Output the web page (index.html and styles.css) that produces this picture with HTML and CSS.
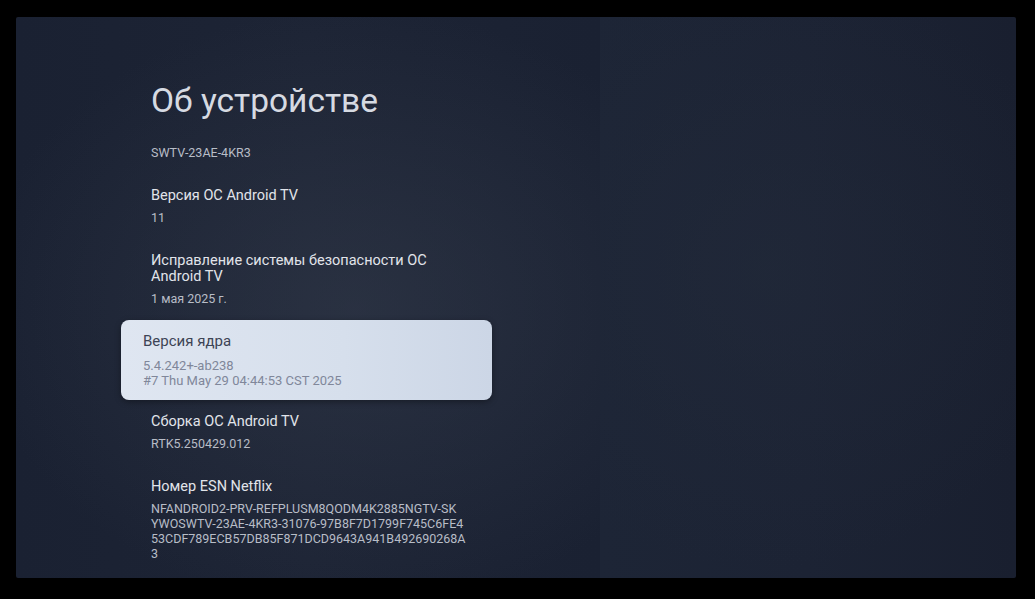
FILE: index.html
```html
<!DOCTYPE html>
<html lang="ru">
<head>
<meta charset="utf-8">
<title>Об устройстве</title>
<link rel="stylesheet" href="styles.css">
</head>
<body>
<div class="screen">
  <section class="panel-main">
    <h1 class="page-title">Об устройстве</h1>
    <div class="list">
      <div class="item">
        <div class="value">SWTV-23AE-4KR3</div>
      </div>
      <div class="item">
        <div class="label">Версия ОС Android TV</div>
        <div class="value">11</div>
      </div>
      <div class="item">
        <div class="label">Исправление системы безопасности ОС Android TV</div>
        <div class="value">1 мая 2025 г.</div>
      </div>
      <div class="item item-focused">
        <div class="label">Версия ядра</div>
        <div class="value">5.4.242+-ab238<br>#7 Thu May 29 04:44:53 CST 2025</div>
      </div>
      <div class="item">
        <div class="label">Сборка ОС Android TV</div>
        <div class="value">RTK5.250429.012</div>
      </div>
      <div class="item">
        <div class="label">Номер ESN Netflix</div>
        <div class="value value-code">NFANDROID2-PRV-REFPLUSM8QODM4K2885NGTV-SK<br>YWOSWTV-23AE-4KR3-31076-97B8F7D1799F745C6FE4<br>53CDF789ECB57DB85F871DCD9643A941B492690268A<br>3</div>
      </div>
    </div>
  </section>
  <section class="panel-side"></section>
</div>
</body>
</html>
```

FILE: styles.css
```css
html, body {
  margin: 0;
  padding: 0;
  background: #000;
  width: 1035px;
  height: 599px;
  overflow: hidden;
  font-family: Roboto, "Noto Sans", "Liberation Sans", sans-serif;
}

.screen {
  margin: 17px 0 0 16px;
  width: 1000px;
  height: 561px;
  display: flex;
  overflow: hidden;
  border-radius: 2px;
}

.panel-main {
  width: 584px;
  flex: none;
  box-sizing: border-box;
  padding: 65px 0 0 105px;
  background:
    radial-gradient(ellipse 380px 300px at 58% 52%, rgba(52, 60, 76, 0.55), rgba(52, 60, 76, 0) 100%),
    linear-gradient(90deg, #1a2132 0%, #1d2435 50%, #1a2132 100%);
}

.panel-side {
  flex: 1;
  background:
    radial-gradient(ellipse 320px 300px at 40% 45%, rgba(36, 44, 60, 0.45), rgba(36, 44, 60, 0) 100%),
    linear-gradient(90deg, #1d2536 0%, #1c2334 50%, #191f2f 100%);
}

.page-title {
  margin: 0 0 11px 30px;
  font-weight: 400;
  font-size: 33.5px;
  line-height: 38px;
  color: #d6dae2;
}

.list {
  width: 371px;
  display: flex;
  flex-direction: column;
}

.item {
  padding: 14px 30px;
}

.label {
  font-size: 14.5px;
  line-height: 16px;
  color: #e1e4ea;
}

.value {
  margin-top: 6px;
  font-size: 12.5px;
  line-height: 15px;
  color: #b8bdc7;
}

.value-code {
  white-space: nowrap;
}

.item > .value:first-child {
  margin-top: 0;
}

.item-focused {
  padding: 13px 22px 12px;
  border-radius: 8px;
  background: linear-gradient(90deg, #dfe6f1 0%, #d6dfec 60%, #ccd6e6 100%);
  box-shadow: 0 2px 6px rgba(0, 0, 0, 0.35);
}

.item-focused .label {
  font-size: 15px;
  color: #3d4455;
}

.item-focused .value {
  margin-top: 9px;
  font-size: 13px;
  color: #80879a;
}
```
